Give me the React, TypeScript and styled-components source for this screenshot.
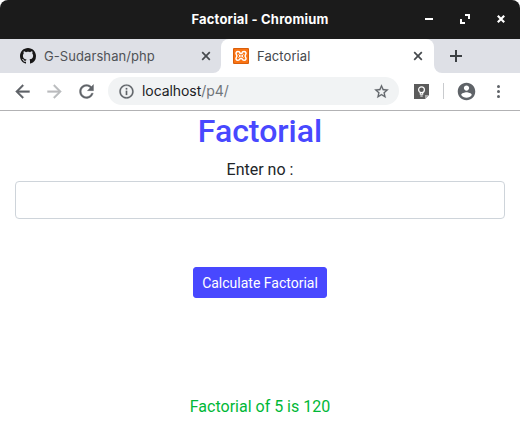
import React from 'react';
import styled, { createGlobalStyle } from 'styled-components';

const GlobalStyle = createGlobalStyle`
  *, *::before, *::after { box-sizing: border-box; }
  body { margin: 0; background: #fff; overflow: hidden; }
`;

const Window = styled.div`
  width: 520px;
  height: 436px;
  display: flex;
  flex-direction: column;
  background: #fff;
  font-family: Inter, sans-serif;
`;

const TitleBar = styled.header`
  height: 39px;
  display: grid;
  grid-template-columns: 105px 1fr 105px;
  align-items: center;
  background: #1b1b1b;
  color: #fff;
  border-radius: 8px 8px 0 0;
`;

const WindowTitle = styled.h1`
  grid-column: 2;
  margin: 0;
  padding-bottom: 1px;
  font-size: 13px;
  font-weight: 700;
  line-height: 16px;
  letter-spacing: 0.18px;
  text-align: center;
  white-space: nowrap;
`;

const WindowControls = styled.div`
  display: flex;
  justify-content: space-between;
  padding: 0 14px 1px 9px;
`;

const Icon = styled.svg`
  display: block;
  flex: none;
`;

const TabStrip = styled.nav`
  height: 34px;
  display: flex;
`;

const TabSlot = styled.div<{ $base: string; $grow?: boolean }>`
  flex: ${(p) => (p.$grow ? '1' : 'none')};
  display: flex;
  background: ${(p) => p.$base};
`;

const Tab = styled.div<{ $active?: boolean }>`
  width: ${(p) => (p.$active ? 213 : 221)}px;
  display: flex;
  align-items: center;
  padding: ${(p) => (p.$active ? '0 11px 0 12px' : '0 10px 0 20px')};
  color: ${(p) => (p.$active ? '#45494d' : '#505357')};
  background: ${(p) => (p.$active ? '#fff' : '#dee0e6')};
  border-radius: ${(p) => (p.$active ? '8px 8px 0 0' : '0 0 8px 0')};
`;

const TabTitle = styled.span`
  flex: 1;
  margin-left: 8px;
  font-size: 13px;
  line-height: 16px;
  letter-spacing: 0.08px;
  white-space: nowrap;
`;

const NewTabArea = styled.div`
  flex: 1;
  display: flex;
  align-items: center;
  padding-left: 15px;
  background: #dee0e6;
  border-radius: 0 0 0 8px;
`;

const Toolbar = styled.div`
  height: 38px;
  flex: none;
  display: flex;
  align-items: center;
  padding: 0 12px 1px 11.5px;
  background: #fff;
  border-bottom: 1px solid #b2b2b4;
`;

const NavButtons = styled.div`
  display: flex;
  gap: 11px;
  margin-right: 11.5px;
`;

const AddressBar = styled.div`
  width: 291px;
  height: 28px;
  display: flex;
  align-items: center;
  padding: 0 9.5px;
  border-radius: 14px;
  background: #f1f3f4;
`;

const Url = styled.span`
  flex: 1;
  margin-left: 7.5px;
  font-size: 14px;
  line-height: 18px;
  letter-spacing: -0.07px;
  color: #202124;
`;

const UrlPath = styled.span`
  color: #70757a;
`;

const Actions = styled.div`
  flex: 1;
  display: flex;
  align-items: center;
  margin-left: 15px;
`;

const Divider = styled.span`
  width: 1px;
  height: 16px;
  margin: 0 12px 0 14px;
  background: #c9cbce;
`;

const Menu = styled.div`
  flex: 1;
  display: flex;
  justify-content: flex-end;
  padding-right: 8px;
`;

const Page = styled.main`
  flex: 1;
  display: flex;
  flex-direction: column;
  align-items: center;
  padding: 1px 15px 0;
  font-family: Roboto, sans-serif;
  font-size: 16px;
  line-height: 24px;
  color: #212529;
`;

const Heading = styled.h2`
  margin: 0 0 8px;
  font-size: 32px;
  font-weight: 500;
  line-height: 38.4px;
  color: #4848ff;
`;

const Label = styled.label`
  height: 23px;
`;

const NumberInput = styled.input`
  width: 100%;
  height: 38px;
  padding: 6px 12px;
  border: 1px solid #ced4da;
  border-radius: 4px;
  background: #fff;
  outline: none;
`;

const SubmitButton = styled.button`
  margin-top: 48px;
  height: 31px;
  padding: 5px 8px 3px;
  border: 1px solid #4848ff;
  border-radius: 3px;
  background: #4848ff;
  color: #fff;
  font: 400 14px/21px Roboto, sans-serif;
  white-space: nowrap;
`;

const Result = styled.p`
  margin: 97px 0 0;
  color: #00b837;
`;

function Glyph({ size, d, color, weight = 0 }: { size: number; d: string; color: string; weight?: number }) {
  return (
    <Icon width={size} height={size} viewBox="0 0 24 24" fill={color} stroke={color} strokeWidth={weight}>
      <path d={d} />
    </Icon>
  );
}

const paths = {
  back: 'M20 11H7.83l5.59-5.59L12 4l-8 8 8 8 1.41-1.41L7.83 13H20v-2z',
  forward: 'M12 4l-1.41 1.41L16.17 11H4v2h12.17l-5.58 5.59L12 20l8-8z',
  refresh:
    'M17.65 6.35C16.2 4.9 14.21 4 12 4c-4.42 0-7.99 3.58-7.99 8s3.57 8 7.99 8c3.73 0 6.84-2.55 7.73-6h-2.08c-.82 2.33-3.04 4-5.65 4-3.31 0-6-2.69-6-6s2.69-6 6-6c1.66 0 3.14.69 4.22 1.78L13 11h7V4l-2.35 2.35z',
  info: 'M11 7h2v2h-2zm0 4h2v6h-2zm1-9C6.48 2 2 6.48 2 12s4.48 10 10 10 10-4.48 10-10S17.52 2 12 2zm0 18c-4.41 0-8-3.59-8-8s3.59-8 8-8 8 3.59 8 8-3.59 8-8 8z',
  star: 'M22 9.24l-7.19-.62L12 2 9.19 8.63 2 9.24l5.46 4.73L5.82 21 12 17.27 18.18 21l-1.63-7.03L22 9.24zM12 15.4l-3.76 2.27 1-4.28-3.32-2.88 4.38-.38L12 6.1l1.71 4.04 4.38.38-3.32 2.88 1 4.28L12 15.4z',
  account:
    'M12 2C6.48 2 2 6.48 2 12s4.48 10 10 10 10-4.48 10-10S17.52 2 12 2zm0 3c1.66 0 3 1.34 3 3s-1.34 3-3 3-3-1.34-3-3 1.34-3 3-3zm0 14.2c-2.5 0-4.71-1.28-6-3.22.03-1.99 4-3.08 6-3.08 1.99 0 5.97 1.09 6 3.08-1.29 1.94-3.5 3.22-6 3.22z',
};

function GithubIcon() {
  return (
    <Icon width="16" height="16" viewBox="0 0 16 16" fill="#181717">
      <path d="M8 0C3.58 0 0 3.58 0 8c0 3.54 2.29 6.53 5.47 7.59.4.07.55-.17.55-.38 0-.19-.01-.82-.01-1.49-2.01.37-2.53-.49-2.69-.94-.09-.23-.48-.94-.82-1.13-.28-.15-.68-.52-.01-.53.63-.01 1.08.58 1.23.82.72 1.21 1.87.87 2.33.66.07-.52.28-.87.51-1.07-1.78-.2-3.64-.89-3.64-3.95 0-.87.31-1.59.82-2.15-.08-.2-.36-1.02.08-2.12 0 0 .67-.21 2.2.82.64-.18 1.32-.27 2-.27s1.36.09 2 .27c1.53-1.04 2.2-.82 2.2-.82.44 1.1.16 1.92.08 2.12.51.56.82 1.27.82 2.15 0 3.07-1.87 3.75-3.65 3.95.29.25.54.73.54 1.48 0 1.07-.01 1.93-.01 2.2 0 .21.15.46.55.38A8.01 8.01 0 0 0 16 8c0-4.42-3.58-8-8-8z" />
    </Icon>
  );
}

function XamppIcon() {
  return (
    <Icon width="16" height="16" viewBox="0 0 16 16" fill="none">
      <rect width="16" height="16" rx="1" fill="#d95f0b" />
      <rect x="1" y="1" width="14" height="14" rx="1" fill="#fa7414" />
      <path
        d="M5 3.6c1.6 0 2 1 2.2 1.9h1.6c.2-.9.6-1.9 2.2-1.9 1.9 0 2.5 1.7 1.6 2.9-.7.9-.7 2 0 2.9.9 1.3.3 2.9-1.6 2.9-1.6 0-2-1-2.2-1.9H7.2c-.2.9-.6 1.9-2.2 1.9-1.9 0-2.5-1.6-1.6-2.9.7-.9.7-2 0-2.9C2.5 5.3 3.1 3.6 5 3.6z"
        stroke="#fff"
        strokeWidth="1.5"
      />
      <path d="M5.6 6.4L7 8l-1.4 1.6M10.4 6.4L9 8l1.4 1.6M7 8h2" stroke="#fff" strokeWidth="1" />
    </Icon>
  );
}

function CloseIcon() {
  return (
    <Icon width="10" height="10" viewBox="0 0 10 10" stroke="#45494d" strokeWidth="1.7">
      <path d="M1.2 1.2l7.6 7.6M8.8 1.2L1.2 8.8" />
    </Icon>
  );
}

function NoteIcon() {
  return (
    <Icon width="15" height="15" viewBox="0 0 15 15" fill="none">
      <path d="M0 0h15v11l-4 4H0z" fill="#5b5b5b" />
      <path d="M15 11l-4 4v-4z" fill="#aaa" />
      <circle cx="7.5" cy="5.8" r="2.9" stroke="#fff" strokeWidth="1.2" />
      <path d="M6.3 8.3v2h2.4v-2M6.3 12h2.4" stroke="#fff" strokeWidth="1.1" />
    </Icon>
  );
}

export default function App() {
  return (
    <>
      <GlobalStyle />
      <Window>
        <TitleBar>
          <WindowTitle>Factorial - Chromium</WindowTitle>
          <WindowControls>
            <Icon width="10" height="10" viewBox="0 0 10 10">
              <path d="M1 4h8v2H1z" fill="#fff" />
            </Icon>
            <Icon width="10" height="10" viewBox="0 0 10 10" fill="#fff">
              <path d="M5 0h5v5H8V2H5zM0 5h2v3h3v2H0z" />
            </Icon>
            <Icon width="10" height="10" viewBox="0 0 10 10" stroke="#fff" strokeWidth="2.2">
              <path d="M1.8 1.8l6.4 6.4M8.2 1.8L1.8 8.2" />
            </Icon>
          </WindowControls>
        </TitleBar>
        <TabStrip>
          <TabSlot $base="#fff">
            <Tab>
              <GithubIcon />
              <TabTitle>G-Sudarshan/php</TabTitle>
              <CloseIcon />
            </Tab>
          </TabSlot>
          <TabSlot $base="#dee0e6">
            <Tab $active>
              <XamppIcon />
              <TabTitle>Factorial</TabTitle>
              <CloseIcon />
            </Tab>
          </TabSlot>
          <TabSlot $base="#fff" $grow>
            <NewTabArea>
              <Icon width="14" height="14" viewBox="0 0 14 14" fill="#3c4043">
                <path d="M6 1h2v5h5v2H8v5H6V8H1V6h5z" />
              </Icon>
            </NewTabArea>
          </TabSlot>
        </TabStrip>
        <Toolbar>
          <NavButtons>
            <Glyph size={21} d={paths.back} color="#5f6368" weight={0.4} />
            <Glyph size={21} d={paths.forward} color="#babcbe" weight={0.4} />
            <Glyph size={21} d={paths.refresh} color="#5f6368" weight={0.4} />
          </NavButtons>
          <AddressBar>
            <Glyph size={17} d={paths.info} color="#5f6368" weight={0.3} />
            <Url>
              localhost<UrlPath>/p4/</UrlPath>
            </Url>
            <Glyph size={17} d={paths.star} color="#5f6368" weight={0.3} />
          </AddressBar>
          <Actions>
            <NoteIcon />
            <Divider />
            <Glyph size={21} d={paths.account} color="#5f6368" />
            <Menu>
              <Icon width="3" height="13" viewBox="0 0 3 13" fill="#5f6368">
                <circle cx="1.5" cy="1.5" r="1.5" />
                <circle cx="1.5" cy="6.5" r="1.5" />
                <circle cx="1.5" cy="11.5" r="1.5" />
              </Icon>
            </Menu>
          </Actions>
        </Toolbar>
        <Page>
          <Heading>Factorial</Heading>
          <Label htmlFor="number">Enter no :</Label>
          <NumberInput id="number" />
          <SubmitButton>Calculate Factorial</SubmitButton>
          <Result>Factorial of 5 is 120</Result>
        </Page>
      </Window>
    </>
  );
}
